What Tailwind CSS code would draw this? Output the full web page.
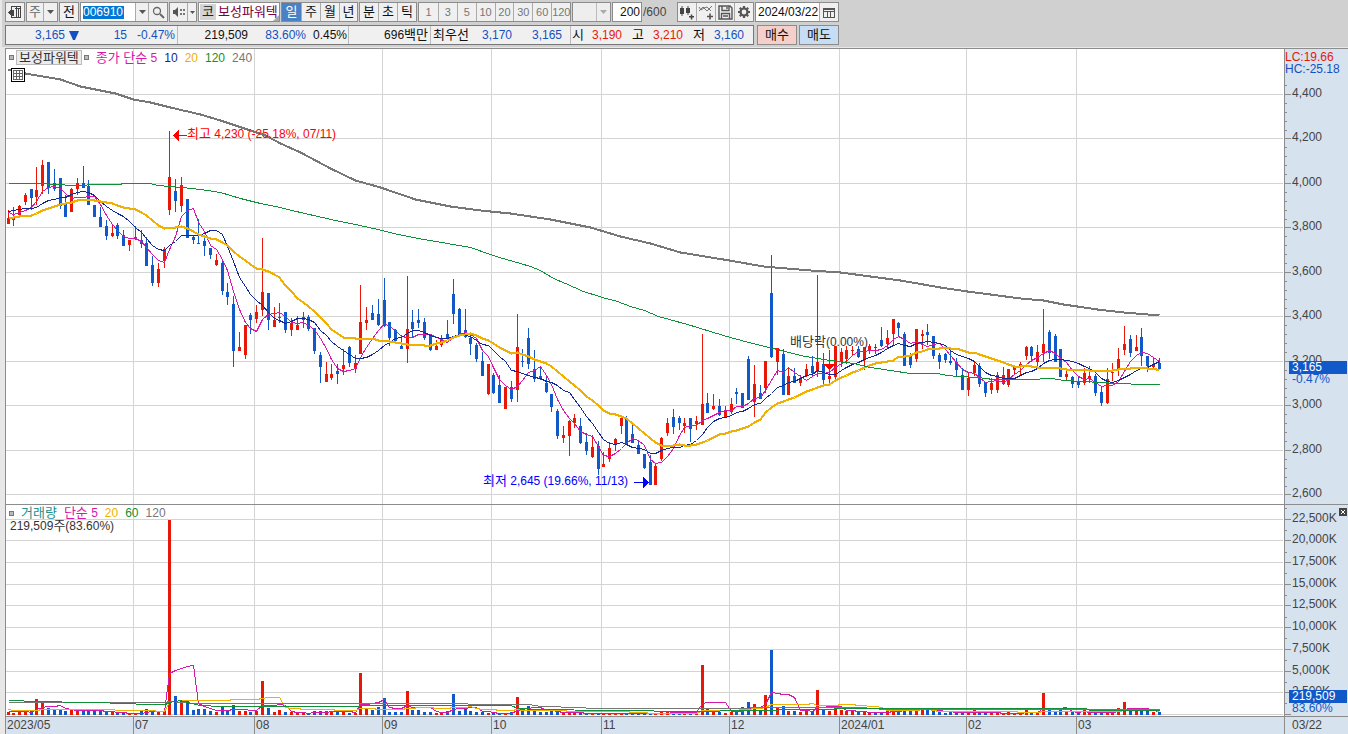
<!DOCTYPE html>
<html lang="ko">
<head>
<meta charset="utf-8">
<title>보성파워텍 차트</title>
<script src="https://cdn.jsdelivr.net/npm/@tailwindcss/browser@4"></script>
</head>
<body class="flex h-screen flex-col overflow-hidden bg-[#d0d0d0] font-['Liberation_Sans','Noto_Sans_CJK_KR',sans-serif] text-[12px] leading-4 text-[#111]">

<header class="flex h-12 shrink-0 flex-col gap-[3px] border-b border-[#e8e8e8] border-l-[#e8e8e8] border-l-2 pt-[2px] pl-[3px] whitespace-nowrap">
  <div class="flex h-5 items-stretch gap-px">
    <button aria-label="패널" class="flex w-5 items-center justify-center border border-[#8c8c8c] bg-[#f0f0f0]">
      <svg width="14" height="14" viewBox="0 0 14 14" fill="none" stroke="#444" shape-rendering="crispEdges"><path d="M3.500 4V1.500H12.500V12.500H3.500V11M8.500 2V12M10.500 4V12M7 3.500H12"/><path d="M0 7.500L4 4V11Z" fill="#444" stroke="none"/><path d="M5 5V11" stroke-width="2"/></svg>
    </button>
    <div class="flex w-8 border border-[#8c8c8c] bg-[#f0f0f0] text-[13px] text-[#666]">
      <button class="w-[17px] border-r border-[#aaa]">주</button>
      <button aria-label="주기 선택" class="flex flex-1 items-center justify-center"><svg width="7" height="4"><path d="M0 0H7L3.500 4Z" fill="#555"/></svg></button>
    </div>
    <button class="w-5 border border-[#8c8c8c] bg-[#f0f0f0] text-[13px]">전</button>
    <div class="flex w-[88px] border border-[#8c8c8c] bg-white">
      <label class="flex w-[54px] items-center pl-[2px]"><input aria-label="종목코드" value="006910" class="h-[13px] w-[41px] bg-[#0078d7] text-white outline-none"></label>
      <button aria-label="종목 목록" class="flex w-[14px] items-center justify-center border-x border-[#aaa] bg-[#f0f0f0]"><svg width="7" height="4"><path d="M0 0H7L3.500 4Z" fill="#555"/></svg></button>
      <button aria-label="종목 검색" class="flex flex-1 items-center justify-center bg-[#f0f0f0]"><svg width="13" height="13" viewBox="0 0 13 13" fill="none" stroke="#666"><circle cx="5" cy="5" r="3.500" stroke-width="1.300"/><path d="M8 8L12 12" stroke-width="2"/></svg></button>
    </div>
    <div class="flex w-7 border border-[#8c8c8c] bg-[#f0f0f0]">
      <button aria-label="음성" class="flex w-[18px] items-center justify-center border-r border-[#aaa]"><svg width="13" height="12" viewBox="0 0 13 12" fill="#555"><path d="M1 4H3L6 1V11L3 8H1Z"/><path d="M8 3h2v2H8zM8 7h2v2H8zM11 3h2v2h-2zM11 7h2v2h-2z" fill="#777"/></svg></button>
      <button aria-label="음성 메뉴" class="flex flex-1 items-center justify-center"><svg width="5" height="3"><path d="M0 0H5L2.500 3Z" fill="#555"/></svg></button>
    </div>
    <div class="relative flex w-[82px] items-center border border-[#8c8c8c] bg-white text-[13px]">
      <button class="m-px h-4 w-4 bg-[#d4d4d4] text-[#222]">코</button><span class="pl-px text-[#7a0040]">보성파워텍</span>
      <svg class="absolute right-0 bottom-0" width="6" height="6"><path d="M6 0V6H0Z" fill="#aaa"/></svg>
    </div>
    <div class="flex w-[77px] border border-[#8c8c8c] bg-[#f0f0f0] text-[13px]">
      <button class="w-[19px] bg-[#4a80c4] text-white">일</button>
      <button class="w-[19px] border-l border-[#aaa]">주</button>
      <button class="w-[19px] border-l border-[#aaa]">월</button>
      <button class="flex-1 border-l border-[#aaa]">년</button>
    </div>
    <div class="flex w-[58px] border border-[#8c8c8c] bg-[#f0f0f0] text-[13px]">
      <button class="flex-1">분</button>
      <button class="flex-1 border-l border-[#aaa]">초</button>
      <button class="flex-1 border-l border-[#aaa]">틱</button>
    </div>
    <div class="grid w-[153px] grid-cols-8 border border-[#8c8c8c] bg-[#f0f0f0] text-[11px] text-[#777]">
      <button>1</button><button class="border-l border-[#aaa]">3</button><button class="border-l border-[#aaa]">5</button><button class="border-l border-[#aaa]">10</button><button class="border-l border-[#aaa]">20</button><button class="border-l border-[#aaa]">30</button><button class="border-l border-[#aaa]">60</button><button class="border-l border-[#aaa]">120</button>
    </div>
    <div class="flex w-[39px] border border-[#8c8c8c] bg-[#eee]">
      <button aria-label="분 단위 선택" disabled class="ml-auto flex w-[14px] items-center justify-center border-l border-[#bbb]"><svg width="7" height="4"><path d="M0 0H7L3.500 4Z" fill="#aaa"/></svg></button>
    </div>
    <input aria-label="표시 개수" value="200" class="w-[30px] border border-[#8c8c8c] bg-white pr-px text-right outline-none">
    <span class="flex w-[33px] items-center text-[#444]">/600</span>
    <div class="flex w-[77px] border border-[#8c8c8c] bg-[#f0f0f0]">
      <button aria-label="차트 추가" class="flex flex-1 items-center justify-center"><svg width="16" height="15" viewBox="0 0 16 15" fill="#444"><path d="M1 3h4v6H1zM2.500 1h1v10h-1zM7 3h4v5H7zM8.500 1h1v9h-1zM10 11h5v1.500h-5zM11.800 9.500h1.500v5h-1.500z"/></svg></button>
      <button aria-label="지표 추가" class="flex flex-1 items-center justify-center border-l border-[#aaa]"><svg width="16" height="15" viewBox="0 0 16 15" fill="none" stroke="#555"><path d="M1 6L5 2L9 6L14 1M1 2L3 5L6 3L9 2L13 6" stroke-width=".8"/><path d="M9 11.500H15M12 8.500V14.500" stroke-width="1.600"/></svg></button>
      <button aria-label="저장" class="flex flex-1 items-center justify-center border-l border-[#aaa]"><svg width="15" height="15" viewBox="0 0 15 15" fill="none" stroke="#555" stroke-width="1.400"><path d="M1 1H12L14 3V14H1ZM4 1V5.500H11V1M3.500 14V8.500H11.500V14M9 2V4M5 11H10"/></svg></button>
      <button aria-label="설정" class="flex flex-1 items-center justify-center border-l border-[#aaa]"><svg width="14" height="14" viewBox="0 0 14 14" fill="none" stroke="#555"><circle cx="7" cy="7" r="3.500" stroke-width="2.200"/><path d="M7 1V3M7 11V13M1 7H3M11 7H13M2.800 2.800L4.200 4.200M9.800 9.800L11.200 11.200M11.200 2.800L9.800 4.200M4.200 9.800L2.800 11.200" stroke-width="2.200"/></svg></button>
    </div>
    <div class="flex w-[84px] border border-[#8c8c8c] bg-white">
      <input aria-label="기준일" value="2024/03/22" class="w-[63px] pl-[2px] outline-none">
      <button aria-label="달력" class="flex flex-1 items-center justify-center border-l border-[#aaa] bg-[#f0f0f0]"><svg width="12" height="11" viewBox="0 0 12 11" fill="none" stroke="#555" shape-rendering="crispEdges"><path d="M.5 1.500H11.500V10.500H.5ZM.5 4.500H11.500M4.500 4V10M7.500 4V10"/><path d="M0 2H12" stroke-width="2"/></svg></button>
    </div>
  </div>

  <div class="flex h-5 items-stretch gap-[3px]">
    <div class="flex w-[749px] items-stretch border border-[#777] bg-[#f0f0f0]">
      <div class="flex w-[172px] items-center justify-end border-r border-[#bbb] pr-[2px] text-[#1450c0]"><span class="pr-[4px]">3,165</span><svg width="10" height="9"><path d="M0 0H10L6 9H4Z" fill="#1450c0"/></svg><span class="w-12 text-right">15</span><span class="w-12 text-right">-0.47%</span></div>
      <div class="flex w-[171px] items-center justify-end border-r border-[#bbb] pr-px"><span>219,509</span><span class="w-[58px] text-right text-[#1450c0]">83.60%</span><span class="w-[41px] text-right">0.45%</span></div>
      <div class="flex w-[82px] items-center justify-end border-r border-[#bbb] pr-[2px]">696<span class="text-[13px]">백만</span></div>
      <div class="flex w-[140px] items-center border-r border-[#bbb] pr-2 pl-[2px]"><span class="text-[13px]">최우선</span><span class="flex-1 text-right text-[#1450c0]">3,170</span><span class="w-[50px] text-right text-[#1450c0]">3,165</span></div>
      <div class="flex flex-1 items-center pr-[9px] pl-px"><span class="w-[12px] text-[13px]">시</span><span class="w-[38px] text-right text-[#e81809]">3,190</span><span class="w-[23px] pl-[10px] text-[13px]">고</span><span class="w-[38px] text-right text-[#e81809]">3,210</span><span class="w-[23px] pl-[10px] text-[13px]">저</span><span class="flex-1 text-right text-[#1450c0]">3,160</span></div>
    </div>
    <div class="flex gap-[2px] text-[13px]">
      <button class="w-10 border border-[#8c8c8c] bg-[#f5d0cb]">매수</button>
      <button class="w-10 border border-[#8c8c8c] bg-[#c7ddf3]">매도</button>
    </div>
  </div>
</header>

<main class="flex min-h-0 flex-1 border-l-5 border-[#e8e8e8]">
  <div class="flex min-w-0 flex-1 flex-col border-t border-l border-[#8c8c8c]">
    <section class="relative min-h-0 flex-1 overflow-hidden bg-white">
      <svg id="plot" class="absolute inset-0 size-full" viewBox="6 49 1278 667" preserveAspectRatio="none" shape-rendering="crispEdges" fill="none"></svg>
      <div class="relative flex h-4 items-center gap-[7px] pt-px pl-[3px]">
        <div class="flex items-center gap-[2px]">
          <i class="size-[5px] border border-[#777] bg-[#bbb]"></i>
          <button class="h-[15px] border border-[#bbb] bg-[#ececec] px-[2px] text-[13px] leading-[13px] text-[#333]">보성파워텍</button>
          <i class="size-[5px] border border-[#777] bg-[#bbb]"></i>
        </div>
        <span class="text-[#d818a8]"><span class="text-[13px]">종가 단순</span> 5</span>
        <span class="text-[#102898]">10</span><span class="text-[#f0b000]">20</span><span class="text-[#109030]">120</span><span class="text-[#777]">240</span>
      </div>
      <button aria-label="표 보기" class="absolute top-[19px] left-[5px] flex size-[14px] items-center justify-center border border-black bg-white"><svg width="10" height="10" viewBox="0 0 10 10" fill="none" stroke="#666" shape-rendering="crispEdges"><path d="M.5 .5H9.500V9.500H.5ZM0 3.500H10M0 6.500H10M3.500 0V10M6.500 0V10"/></svg></button>
      <div id="notes"></div>
    </section>
    <div id="dates" class="relative h-[18px] shrink-0 overflow-hidden border-t border-[#8c8c8c] bg-[#d7e2ef] text-[#444]"></div>
  </div>
  <aside class="flex w-16 shrink-0 flex-col border-t border-l border-[#8c8c8c] bg-[#d7e2ef] text-[#444]">
    <div id="axis" class="relative min-h-0 flex-1 overflow-hidden">
      <svg id="ticks" class="absolute inset-0 size-full" viewBox="0 49 63 667" preserveAspectRatio="none" shape-rendering="crispEdges" fill="none"></svg>
      <div class="pt-[2px] leading-3"><p class="text-[#e81809]">LC:19.66</p><p class="text-[#1450c0]">HC:-25.18</p></div>
    </div>
    <div class="h-[18px] shrink-0 border-t border-[#8c8c8c] pl-[7px]">03/22</div>
  </aside>
</main>

<script>
// One candle per entry: colour, wick top, body top, body bottom, wick bottom
const C = `r210,218,224,224 r207,217,220,226 r205,206,215,218 r193,195,202,205 b189,189,198,210 r167,190,197,205 r160,165,186,194 b162,162,188,194 b169,183,189,191 b178,178,206,209
b195,203,217,217 r188,189,212,212 r178,183,189,195 b166,183,188,188 b180,186,205,205 b205,205,217,217 b207,217,227,227 b220,226,236,240 r225,233,236,237 b223,225,236,239
b230,235,246,246 r240,240,245,251 r226,237,239,240 b230,240,244,248 b237,243,266,266 b256,265,283,286 r263,269,283,287 r247,249,261,268 r131,177,210,215 b179,191,201,212
r177,185,206,212 b199,199,238,238 b235,237,240,244 b219,243,244,244 b235,241,246,256 b248,248,255,259 r254,260,265,266 b260,263,291,295 b283,292,297,305 b296,304,351,367
r332,347,351,351 r325,325,355,359 b313,315,320,334 r305,312,319,323 r238,292,310,316 b293,293,320,330 r307,320,327,327 r303,317,318,323 b312,312,330,333 r318,323,330,336
r316,325,330,330 r312,317,320,328 b315,317,329,331 b328,328,351,354 b352,355,367,383 r362,374,382,382 r364,374,378,380 b364,371,374,384 r349,365,369,375 b346,347,363,367
r355,363,369,373 r285,322,354,354 r307,320,323,330 b305,313,320,320 b299,314,325,326 b278,300,326,327 b322,322,338,346 b329,330,341,344 b335,346,349,349 r276,329,349,363
b310,322,329,338 b309,320,323,328 b318,322,338,340 b334,334,350,351 r340,346,350,350 r335,338,345,347 b320,334,339,339 b279,294,314,324 b308,309,334,336 b309,330,337,338
b334,338,344,355 b343,345,359,362 b352,361,376,376 r364,364,394,395 b373,375,393,394 b375,385,403,403 r387,387,409,409 b381,387,399,402 r314,347,390,402 b349,361,362,367
b328,338,364,369 b350,369,379,382 b366,376,379,380 b375,383,392,393 b394,394,407,412 b409,411,436,439 r426,435,438,443 r420,421,436,456 r414,418,423,428 b418,426,443,444
b433,442,451,455 r435,447,457,458 b441,446,469,475 r452,464,467,467 r442,448,459,462 r438,439,444,451 r417,418,426,434 b416,418,444,445 b425,434,443,443 b441,445,454,454
b454,454,468,469 b455,462,485,485 r464,466,485,485 r437,438,459,461 r418,423,433,436 b409,417,427,434 b416,418,423,430 r418,423,426,433 b418,418,429,442 r416,421,424,430
r334,404,425,425 b393,403,413,413 r394,406,409,410 b399,406,415,416 r406,411,417,417 r398,404,412,414 b388,392,394,404 b393,393,408,408 b356,359,400,400 r365,384,402,417
b385,393,399,399 r361,361,388,393 b255,293,357,358 r348,348,362,375 b349,354,395,395 r368,376,395,395 b368,376,383,383 r375,379,383,386 r364,369,376,377 b356,366,373,376
r275,362,372,377 b353,364,380,386 r350,376,379,386 r346,346,377,380 r348,352,362,367 r346,350,359,364 r346,350,351,356 b346,349,357,358 r347,347,360,370 r344,346,350,354
b344,347,348,354 b327,340,346,347 r330,338,344,349 r319,319,334,346 b322,323,328,337 b332,334,366,366 b353,356,365,368 r329,329,359,362 r330,334,336,349 b324,332,335,345
b336,336,356,359 b353,355,362,369 b353,354,360,363 b349,361,363,365 b358,362,370,376 b368,375,390,390 r372,378,390,396 r362,365,373,376 b363,366,384,387 b382,382,393,397
r378,383,390,394 r372,375,390,393 r367,375,384,385 r369,369,385,387 r365,366,370,374 r362,364,366,375 r346,347,356,360 b346,347,356,362 r345,352,362,368 r309,344,353,362
b330,332,353,359 b334,336,362,362 b349,349,377,377 r368,374,377,380 b376,377,384,388 b376,381,385,388 r368,373,383,385 r366,376,379,383 b374,376,393,396 b387,392,403,406
r368,379,403,404 r363,372,373,381 r348,359,370,376 r326,344,350,355 b335,339,353,357 r335,347,351,351 b328,337,356,366 b356,356,366,372 r357,365,367,369 b358,363,369,370`
  .split(/\s+/).map(s => [s[0], ...s.slice(1).split(',').map(Number)]);

// Volume bar heights
const V = [3,2,3,4,4,16,13,7,6,6,4,5,5,5,5,4,4,3,3,2,2,2,2,4,6,4,3,4,195,19,15,14,5,6,6,4,3,8,4,10,4,4,3,4,34,7,3,5,3,3,
2,2,2,4,4,4,4,4,4,2,2,42,7,5,8,17,3,3,3,24,5,5,3,3,2,2,4,21,4,6,4,3,3,2,2,2,2,3,18,5,9,5,3,3,4,4,2,3,3,2,
2,2,2,2,2,2,2,2,2,2,2,2,2,3,3,4,3,2,3,3,50,6,5,3,2,3,5,8,13,11,5,20,65,7,9,4,4,3,4,4,25,6,4,6,5,4,4,3,3,3,
2,3,5,5,5,6,6,6,6,6,4,4,2,3,3,3,2,5,3,3,2,2,2,3,2,2,5,3,2,22,5,3,5,3,4,2,5,2,2,2,4,4,7,13,6,6,5,5,3,3];

const RED = '#e81809', BLUE = '#1158c8';
const X = i => Math.floor(8 + 5.785 * i);
const col = c => c === 'r' ? RED : BLUE;
const closes = C.map(c => c[0] === 'r' ? c[2] : c[3]);
const vols = V.map(v => 715 - v);
// Moving average of n values; `head` holds the values that precede the first full window
const average = (a, n, head) => a.map((_, i) => i < n - 1 ? head[i] : a.slice(i - n + 1, i + 1).reduce((s, v) => s + v, 0) / n);
const path = (pts, color, w = 1) => `<polyline stroke="${color}" stroke-width="${w}" points="${pts.map(p => (p[0] + .5) + ',' + (Math.round(p[1]) + .5)).join(' ')}"/>`;
const series = (a, color, w) => path(a.map((v, i) => [X(i), v]), color, w);
const pairs = s => s.trim().split(' ').map(p => p.split(',').map(Number));
const rect = (x, y, w, h, f) => `<rect x="${x}" y="${y}" width="${w}" height="${h}" fill="${f}"/>`;

const priceY = [94,138,183,227,272,316,361,405,450,494];
const volY = [519,540,562,584,605,627,649,671,692,714];
const months = [['2023/05',6],['07',133],['08',254],['09',382],['10',491],['11',601],['12',729],['2024/01',839],['02',966],['03',1076]];

let s = '';
for (const y of [...priceY, ...volY]) s += rect(6, y, 1277, 1, '#d4d4d4');
for (const m of months.slice(1)) s += rect(m[1], 49, 1, 667, '#d4d4d4');
s += rect(6, 504, 1278, 1, '#8c8c8c');
C.forEach((c, i) => {
  const x = X(i), f = col(c[0]);
  s += rect(x, c[1], 1, Math.max(1, c[4] - c[1]), f) + rect(x - 1, c[2], 3, Math.max(1, c[3] - c[2]), f) + rect(x - 1, 715 - V[i], 3, V[i], f);
});
s += series(average(closes, 5, [212,214,212,210]), '#d818a8');
s += series(average(closes, 10, [211,210,209,208,208,207,203,200,199]), '#102898');
s += series(average(closes, 20, [217,217,216,215,215,213,210,208,206,204,203,202,200,199,199,200,201,202,203]), '#f0b000', 2);
s += path(pairs('8,183 45,183 50,184 62,184 67,185 85,185 88,184 120,184 122,183 150,183 157,185 182,187 200,189 220,192 240,198 260,203 275,206 300,212 335,220 355,224 382,230 393,233 418,238 447,243 470,247 490,254 499,257 520,263 530,266 540,270 553,278 565,283 583,291 602,297 617,301 630,306 644,310 658,316 687,324 697,327 713,332 730,337 752,343 777,349 800,355 823,359 853,363 870,367 890,370 910,373 937,373 947,375 957,376 977,377 993,379 1037,379 1042,378 1052,378 1063,380 1083,381 1100,382 1117,383 1143,384 1159,384'), '#109038');
s += path(pairs('8,69 25,73 60,79 80,86 100,90 115,93 133,99 150,102 170,107 200,114 220,120 250,130 265,135 280,143 300,152 330,168 355,180 380,187 415,199 450,206 480,210 510,213 550,219 590,227 620,236 650,243 680,252 729,260 763,266 810,270 840,272 870,276 900,280 940,287 967,291 990,294 1020,298 1043,300 1063,304 1077,306 1097,309 1123,312 1159,315'), '#777', 2);
s += series(average(vols, 5, [711,711,711,711]), '#d818a8');
s += series(average(vols, 20, [709,710,710,710,710,710,709,709,709,709,709,709,709,709,709,709,709,709,709]), '#f0b000');
s += path(pairs('8,702 165,702 169,701 195,703 465,703 470,704 528,704 540,706 580,707 590,708 740,708 760,707 860,707 885,709 1159,709'), '#777');
s += path(pairs('8,700 23,700 24,701 98,702 120,703 150,704 165,704 169,702 180,700 195,704 200,705 220,706 355,706 363,705 510,705 518,708 540,709 606,710 700,711 740,710 773,710 783,709 885,708 1085,708 1090,710 1159,710'), '#109038');
// Arrows for the highest and lowest price and the ex-dividend mark
s += `<path d="M173 135.500L179 130V141Z" fill="#f00"/><path d="M178 135.500H187" stroke="#f00"/><path d="M649 482.500L643 477V488Z" fill="#00f"/><path d="M634 482.500H644" stroke="#00f"/><path d="M824 364H835L829.500 370Z" fill="#f00"/>`;
document.getElementById('plot').innerHTML = s;

const px = x => (x - 6) / 1278 * 100 + '%', py = y => (y - 49) / 667 * 100 + '%';
const note = (x, y, cls, t) => `<div class="absolute whitespace-nowrap ${cls}" style="left:${px(x)};top:${py(y)}">${t}</div>`;
const ko = t => `<span class="text-[13px]">${t}</span>`;
document.getElementById('notes').innerHTML =
  note(187, 126, 'text-[#f00]', ko('최고') + ' 4,230 (-25.18%, 07/11)') +
  note(483, 473, 'text-[#00f]', ko('최저') + ' 2,645 (19.66%, 11/13)') +
  note(790, 334, 'text-[#333]', ko('배당락') + '(0.00%)') +
  note(9, 505, 'flex items-center gap-[7px]', '<i class="size-[5px] border border-[#777] bg-[#bbb]"></i><span class="text-[13px] text-[#209090]">거래량</span><span class="text-[#d818a8]">' + ko('단순') + ' 5</span><span class="text-[#f0b000]">20</span><span class="text-[#109030]">60</span><span class="text-[#777]">120</span>') +
  note(10, 518, 'text-[#333]', '219,509' + ko('주') + '(83.60%)');

document.getElementById('dates').innerHTML = months.map((m, i) =>
  `<span class="absolute top-0 h-full pl-px ${i ? 'border-l border-[#8c8c8c]' : ''}" style="left:${px(m[1])}">${m[0]}</span>`).join('');

let t = '';
for (const y of [...priceY, ...volY]) t += rect(0, y, 6, 1, '#8c8c8c');
for (let i = -1; i < 9; i++) for (let k = 1; k < 5; k++) { const y = Math.round(94 + (i + k / 5) * 44.5); if (y > 76) t += rect(0, y, 2, 1, '#8c8c8c'); }
for (let i = -1; i < 9; i++) t += rect(0, Math.round(519 + (i + .5) * 21.7), 2, 1, '#8c8c8c');
t += rect(0, 504, 63, 1, '#8c8c8c');
document.getElementById('ticks').innerHTML = t;

const label = (y, v) => `<span class="absolute left-[7px]" style="top:${py(y - 9)}">${v}</span>`;
const tag = (y, v, p) => `<span class="absolute left-1 h-[13px] w-[58px] bg-[#1158c8] pl-[3px] leading-[13px] text-white" style="top:${py(y)}">${v}</span><span class="absolute left-[7px] h-[13px] leading-[13px] text-[#1158c8]" style="top:${py(y + 12)}">${p}</span>`;
document.getElementById('axis').insertAdjacentHTML('beforeend',
  priceY.map((y, i) => label(y, (4400 - 200 * i).toLocaleString('en-US'))).join('') +
  volY.slice(0, 9).map((y, i) => label(y, (22500 - 2500 * i).toLocaleString('en-US') + 'K')).join('') +
  tag(361, '3,165', '-0.47%') + tag(690, '219,509', '83.60%') +
  `<button aria-label="닫기" class="absolute right-px flex size-2 items-center justify-center bg-[#444]" style="top:${py(508)}"><svg width="4" height="4"><path d="M0 0L4 4M4 0L0 4" stroke="#fff"/></svg></button>`);
</script>
</body>
</html>
